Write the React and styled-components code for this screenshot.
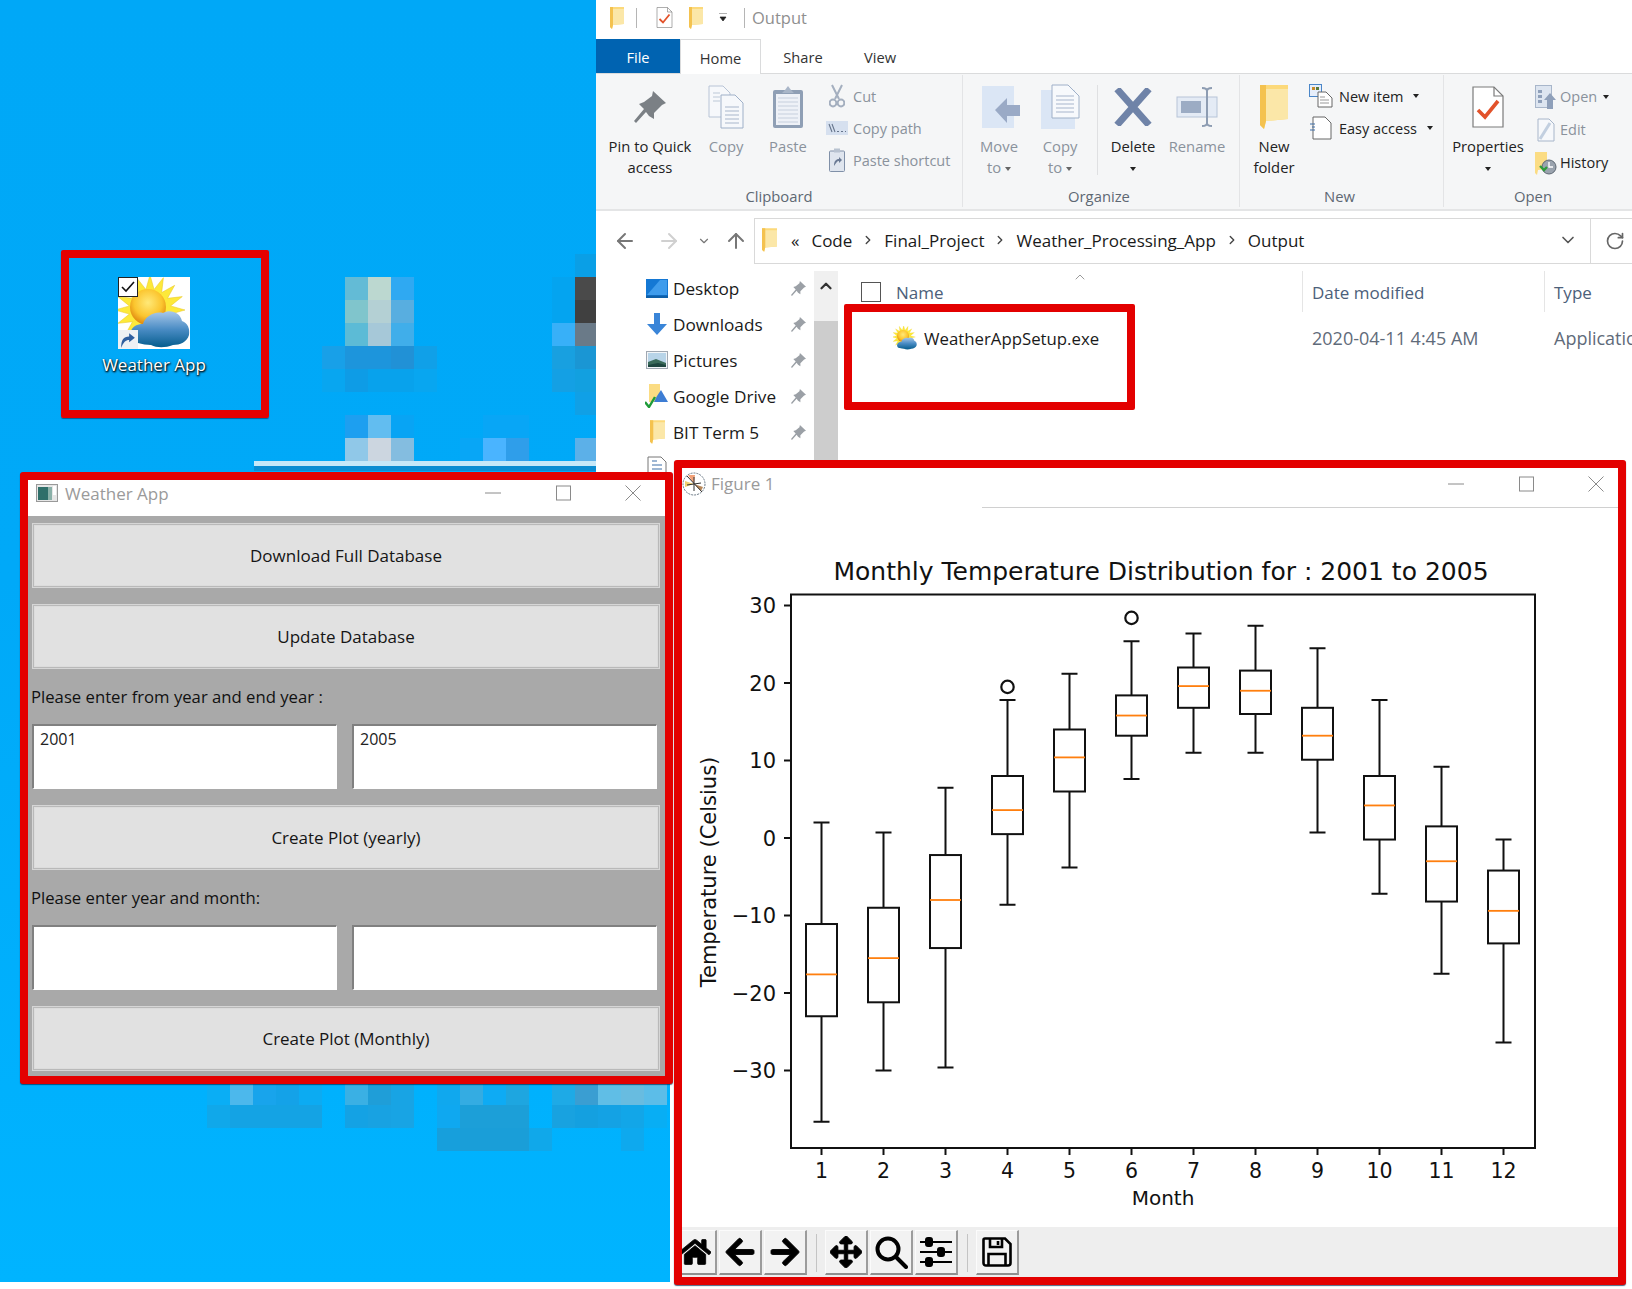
import React from "react";
import styled, { createGlobalStyle } from "styled-components";
import { ArrowLeft, ArrowRight, ArrowUp, ChevronDown, ChevronRight, ChevronUp, RotateCw } from "lucide-react";
import { FaHome, FaArrowLeft, FaArrowRight, FaArrowsAlt } from "react-icons/fa";

const UI_FONT = '"Open Sans", "Noto Sans", sans-serif';
const RED = "#e30000";

const GlobalStyle = createGlobalStyle`
  html, body { margin: 0; padding: 0; background: #fff; }
  body { font-family: ${UI_FONT}; }
`;

const Desktop = styled.div`
  position: relative;
  width: 1632px;
  height: 1289px;
  overflow: hidden;
  background: linear-gradient(180deg, #00a8f7 0, #00a9f8 580px, #00b4ff 1282px, #fff 1282px);
`;

/* ---------- pixelated desktop icons ---------- */
const Mosaic = styled.div`
  position: absolute;
  left: ${(p) => p.$x}px;
  top: ${(p) => p.$y}px;
  display: grid;
  grid-auto-columns: 23px;
  grid-auto-rows: 23px;
`;
const Cell = styled.span`
  grid-column: ${(p) => p.$c};
  grid-row: ${(p) => p.$r};
  background: ${(p) => p.$color};
`;
const upperCells = [
  [12, 1, "#0a9fe6"],
  [2, 2, "#63bbd6"], [3, 2, "#bcd8d0"], [4, 2, "#2fa9f2"], [11, 2, "#04a4f0"], [12, 2, "#4a4a4a"],
  [2, 3, "#80c5cc"], [3, 3, "#b4d0d4"], [4, 3, "#58aee0"], [11, 3, "#04a4f0"], [12, 3, "#404040"],
  [2, 4, "#5cbbd6"], [3, 4, "#a6c8d8"], [4, 4, "#40aeea"], [11, 4, "#38b0f8"], [12, 4, "#6a7a88"],
  [1, 5, "#18a0e8"], [2, 5, "#1d95dc"], [3, 5, "#1d95dc"], [4, 5, "#2191d6"], [5, 5, "#10a0e8"], [11, 5, "#18a0e0"], [12, 5, "#1a96d4"],
  [1, 6, "#08a6f0"], [2, 6, "#0e9ce6"], [3, 6, "#08a2ec"], [4, 6, "#08a2ec"], [5, 6, "#08a6f0"], [11, 6, "#14a0e4"], [12, 6, "#12a0e0"],
  [12, 7, "#10a0e6"],
  [2, 8, "#1d9ff0"], [3, 8, "#62bdf0"], [4, 8, "#08a4f4"], [8, 8, "#08a6f6"], [9, 8, "#08a6f6"],
  [2, 9, "#90c8e8"], [3, 9, "#ccd6e0"], [4, 9, "#84bde0"], [7, 9, "#08a6f6"], [8, 9, "#4ab4ff"], [9, 9, "#2f9eea"], [12, 9, "#5cb0e8"],
];
const lowerCells = [
  [1, 1, "#0aaef5"], [2, 1, "#4cb8ec"], [3, 1, "#18a4ec"], [4, 1, "#14a2e8"], [5, 1, "#0cabf2"],
  [7, 1, "#3ab0e4"], [8, 1, "#1f9ed8"], [9, 1, "#18a4e4"],
  [11, 1, "#10a8ee"], [12, 1, "#34ace2"], [13, 1, "#0eabf4"], [14, 1, "#1ea6e0"],
  [16, 1, "#1eaae6"], [17, 1, "#3a9ed2"], [18, 1, "#60bee6"], [19, 1, "#68bce0"], [20, 1, "#5cbde8"],
  [1, 2, "#10a8ea"], [2, 2, "#14a3e4"], [3, 2, "#14a3e4"], [4, 2, "#14a3e4"], [5, 2, "#14a3e4"],
  [7, 2, "#14a2e4"], [8, 2, "#18a2e2"], [9, 2, "#18a4e4"],
  [11, 2, "#0fa8f0"], [12, 2, "#1c9fd8"], [13, 2, "#1c9fd8"], [14, 2, "#1c9fd8"],
  [16, 2, "#18a2e0"], [17, 2, "#14a0e0"], [18, 2, "#14a2e4"], [19, 2, "#12a6e8"], [20, 2, "#08aef4"],
  [11, 3, "#179fdc"], [12, 3, "#1a9ed8"], [13, 3, "#1a9ed8"], [14, 3, "#1a9ed8"], [15, 3, "#10a8ea"], [19, 3, "#0ea9ee"],
];

const BackWindowEdge = styled.div`
  position: absolute;
  left: 254px;
  top: 461px;
  width: 342px;
  height: 10px;
  background: linear-gradient(180deg, #c6e8f8 0 5px, #0a8dd2 5px 100%);
`;
/* the explorer window carries on behind the figure */
const ExplorerBehind = styled.div`
  position: absolute;
  left: 670px;
  top: 472px;
  width: 962px;
  height: 810px;
  background: #fff;
`;

/* ---------- desktop shortcut ---------- */
const ShortcutCallout = styled.div`
  position: absolute;
  left: 61px;
  top: 250px;
  width: 208px;
  height: 168px;
  box-sizing: border-box;
  border: 8px solid ${RED};
  border-radius: 2px;
  padding: 19px 0 0 49px;
  box-shadow: 0 1px 1px rgba(0, 40, 80, 0.6);
`;
const ShortcutIcon = styled.div`
  position: relative;
  width: 72px;
  height: 72px;
  background: #fff;
`;
const ShortcutCheck = styled.div`
  position: absolute;
  left: 0;
  top: 0;
  width: 20px;
  height: 20px;
  box-sizing: border-box;
  border: 1px solid #222;
  background: #fff;
  display: flex;
  align-items: center;
  justify-content: center;
`;
const ShortcutArrow = styled.div`
  position: absolute;
  left: 0;
  bottom: 0;
  width: 20px;
  height: 19px;
  background: #eef1f4;
  display: flex;
  align-items: center;
  justify-content: center;
`;
const ShortcutLabel = styled.div`
  width: 132px;
  margin: 4px 0 0 -30px;
  text-align: center;
  font-size: 17px;
  line-height: 24px;
  color: #fff;
  text-shadow: 1px 1px 2px #000, 0 1px 2px rgba(0, 0, 0, 0.8);
  white-space: nowrap;
`;

const WeatherGlyph = ({ size = 72 }) => {
  const rays = [];
  for (let i = 0; i < 32; i++) {
    const r = i % 2 ? 21 : 35;
    const a = (i * Math.PI) / 16;
    rays.push(`${(32 + r * Math.sin(a)).toFixed(1)},${(33 - r * Math.cos(a)).toFixed(1)}`);
  }
  return (
    <svg width={size} height={size} viewBox="0 0 72 72">
      <defs>
        <radialGradient id="sunFill" cx="50%" cy="38%" r="60%">
          <stop offset="0%" stopColor="#ffe978" />
          <stop offset="65%" stopColor="#fbc52e" />
          <stop offset="100%" stopColor="#e08a10" />
        </radialGradient>
        <linearGradient id="cloudFill" x1="0" y1="0" x2="0" y2="1">
          <stop offset="0%" stopColor="#a9c8ea" />
          <stop offset="50%" stopColor="#4a8cc4" />
          <stop offset="100%" stopColor="#055d8e" />
        </linearGradient>
      </defs>
      <polygon points={rays.join(" ")} fill="#fde93a" stroke="#e6c520" strokeWidth="0.5" />
      <circle cx="30" cy="30" r="18" fill="url(#sunFill)" />
      <path
        d="M20 66C13 66 11 59 13 54C15 48 21 47 25 47C27 40 36 34 45 36C52 32 62 35 64 44C70 46 72 52 71 58C69 65 62 68 55 68C47 71 39 71 33 68C29 68 24 67 20 66Z"
        fill="url(#cloudFill)"
      />
    </svg>
  );
};

/* ---------- small ribbon / explorer drawings ---------- */
const Folder = ({ w = 14, h = 22 }) => (
  <svg width={w} height={h} viewBox="0 0 14 22">
    <path d="M0 0H14V17L3 18L2 22L0 20Z" fill="#fcd97a" />
    <path d="M3 2H14V17L3 18Z" fill="#fbe7a8" />
    <path d="M0 0H3V18L2 22L0 20Z" fill="#f4c24f" />
  </svg>
);
const Doc = ({ w = 32, h = 42, stroke = "#7b7b7b", children }) => (
  <svg width={w} height={h} viewBox="0 0 32 42">
    <path d="M1 1H22L31 10V41H1Z" fill="#fff" stroke={stroke} strokeWidth="1.2" />
    <path d="M22 1V10H31" fill="none" stroke={stroke} strokeWidth="1.2" />
    {children}
  </svg>
);
const Check = () => <path d="M6 24L13 31L26 15" fill="none" stroke="#e2522a" strokeWidth="3.6" />;
const PinGlyph = ({ size = 32, color = "#7b8085" }) => (
  <svg width={size} height={size} viewBox="0 0 32 32">
    <path d="M19 0L32 12L28 14L20 22L20 28L15 25L12 21L2 32L0 30L10 18L5 13L10 11L18 5Z" fill={color} />
  </svg>
);
const PageLines = ({ x, y, n, w, color = "#bcc7d8", gap = 4 }) => (
  <path d={Array.from({ length: n }, (_, i) => `M${x} ${y + i * gap}h${w}`).join("")} stroke={color} strokeWidth="1.2" />
);
const CopyGlyph = () => (
  <svg width="36" height="44" viewBox="0 0 36 44">
    <path d="M1 1H15L22 8V32H1Z" fill="#f6f8fb" stroke="#b8c4d6" />
    <path d="M13 10H27L35 18V43H13Z" fill="#f6f8fb" stroke="#9fb0c8" />
    <PageLines x={5} y={8} n={3} w={7} />
    <PageLines x={17} y={22} n={5} w={14} color="#a8b6cc" />
  </svg>
);
const PasteGlyph = () => (
  <svg width="32" height="44" viewBox="0 0 32 44">
    <rect x="1" y="5" width="30" height="38" rx="2" fill="#8f9fb5" />
    <rect x="4" y="9" width="24" height="31" fill="#eef1f7" />
    <path d="M10 8L13 5L16 1L19 5L22 8Z" fill="#a9b6c8" />
    <PageLines x={6} y={13} n={7} w={20} color="#c5cfde" />
  </svg>
);
const ScissorsGlyph = () => (
  <svg width="16" height="24" viewBox="0 0 16 24" fill="none" stroke="#a4afbf" strokeWidth="2">
    <path d="M3 1L10 15M13 1L6 15" />
    <circle cx="4" cy="19" r="3.4" />
    <circle cx="12" cy="19" r="3.4" />
  </svg>
);
const CopyPathGlyph = () => (
  <svg width="22" height="14" viewBox="0 0 22 14">
    <rect width="22" height="14" fill="#d6e0ef" />
    <path d="M3 3L6 11M6 3L9 11" stroke="#66758c" strokeWidth="1.1" />
    <path d="M11 10.5h2M15 10.5h2M19 10.5h1" stroke="#66758c" strokeWidth="1.2" />
  </svg>
);
const PasteShortcutGlyph = () => (
  <svg width="16" height="24" viewBox="0 0 16 24">
    <rect x="0.5" y="3" width="15" height="20.5" rx="1" fill="#dfe5ee" stroke="#8090a8" />
    <rect x="5" y="0.5" width="6" height="4" fill="#b8c2d0" />
    <path d="M5 18C5 13 7 11 10 11V9L13 12L10 15V13C8 13 7 15 5 18Z" fill="#6a7a94" />
  </svg>
);
const MoveGlyph = () => (
  <svg width="44" height="44" viewBox="0 0 44 44">
    <rect x="5" y="1" width="32" height="42" fill="#dbe6f5" />
    <path d="M18 25L30 13V20H43V31H30V38Z" fill="#9aaac6" />
  </svg>
);
const CopyToGlyph = () => (
  <svg width="40" height="46" viewBox="0 0 40 46">
    <rect x="1" y="6" width="34" height="39" fill="#dbe6f5" />
    <path d="M12 1H28L39 12V34H12Z" fill="#f7f9fc" stroke="#9fb0c8" />
    <PageLines x={16} y={12} n={5} w={18} color="#a8b6cc" />
  </svg>
);
const DeleteGlyph = () => (
  <svg width="38" height="38" viewBox="0 0 38 38">
    <path d="M3 1L35 37M35 1L3 37" stroke="#6f83a8" strokeWidth="7" />
  </svg>
);
const RenameGlyph = () => (
  <svg width="42" height="40" viewBox="0 0 42 40" fill="none">
    <rect x="1" y="10" width="40" height="20" fill="#e4ebf5" stroke="#b7c4d8" />
    <rect x="5" y="14" width="20" height="12" fill="#9cacc4" />
    <path d="M31 3V37M26 1C29 1 31 2 31 4C31 2 33 1 36 1M26 39C29 39 31 38 31 36C31 38 33 39 36 39" stroke="#8d9cb2" strokeWidth="2" />
  </svg>
);
const NewItemGlyph = () => (
  <svg width="24" height="24" viewBox="0 0 24 24">
    <rect x="0.5" y="0.5" width="12" height="12" fill="#e6eefb" stroke="#4a86c8" />
    <rect x="3" y="3" width="3" height="3" fill="#c88a2a" />
    <rect x="7" y="3" width="3" height="3" fill="#5a7a3a" />
    <path d="M9 8H17L23 14V23H9Z" fill="#fff" stroke="#666" />
    <path d="M11 13h5M11 16h9M11 19h9" stroke="#999" />
  </svg>
);
const EasyAccessGlyph = () => (
  <svg width="22" height="24" viewBox="0 0 22 24">
    <path d="M3 1H15L21 7V23H3Z" fill="#fff" stroke="#666" />
    <path d="M0 8h5M2 11h3M0 14h5" stroke="#3f6fa8" strokeWidth="1.2" />
  </svg>
);
const OpenGlyph = () => (
  <svg width="22" height="24" viewBox="0 0 22 24">
    <rect x="0.5" y="0.5" width="16" height="22" fill="#dde5f0" stroke="#a8b6ca" />
    <path d="M3 5h4v3H3zM3 10h4v3H3zM3 15h4v3H3z" fill="#8fa0ba" />
    <path d="M15 8L21 15H18V24H12V15H9Z" fill="#8fa0ba" />
  </svg>
);
const EditGlyph = () => (
  <svg width="18" height="24" viewBox="0 0 18 24">
    <path d="M1 1H12L17 6V23H1Z" fill="#f6f8fb" stroke="#a8b6ca" />
    <path d="M13 5L3 21" stroke="#c2cfe0" strokeWidth="3" />
  </svg>
);
const HistoryGlyph = () => (
  <svg width="22" height="24" viewBox="0 0 22 24">
    <path d="M0 1H12V18L3 19L2 24L0 22Z" fill="#fbdc83" />
    <circle cx="14" cy="16" r="7" fill="#9aa3ae" stroke="#5e6873" />
    <path d="M14 11V16H18" stroke="#fff" strokeWidth="1.4" fill="none" />
    <path d="M5 15L9 19L12 16" stroke="#2d9b3a" strokeWidth="2.4" fill="none" />
  </svg>
);
const DesktopGlyph = () => (
  <svg width="22" height="19" viewBox="0 0 22 19">
    <rect width="22" height="19" fill="#1478d4" />
    <path d="M1 16L14 1H21V16Z" fill="#3f9cec" />
    <rect y="16.5" width="22" height="2.5" fill="#0e5fa8" />
  </svg>
);
const DownloadGlyph = () => (
  <svg width="20" height="22" viewBox="0 0 20 22">
    <path d="M7 0H13V11H20L10 22L0 11H7Z" fill="#3a85d8" />
  </svg>
);
const PicturesGlyph = () => (
  <svg width="22" height="18" viewBox="0 0 22 18">
    <rect x="0.5" y="0.5" width="21" height="17" fill="#f2f5f8" stroke="#a0a8b2" />
    <rect x="2" y="2" width="18" height="14" fill="#b8d4e8" />
    <path d="M2 11L10 8L20 12V16H2Z" fill="#3a6a5a" />
    <path d="M2 14L12 12L20 14V16H2Z" fill="#1e4640" />
  </svg>
);
const DriveFolderGlyph = () => (
  <svg width="24" height="24" viewBox="0 0 24 24">
    <path d="M4 0H15V18H4Z" fill="#fbdc83" />
    <path d="M12 12L16 6L23 18H9Z" fill="#3d7dd4" />
    <path d="M0 18L4 23L10 13" stroke="#1f9b38" strokeWidth="2.4" fill="none" />
  </svg>
);
const SmallDocGlyph = () => (
  <svg width="20" height="24" viewBox="0 0 20 24">
    <path d="M1 1H14L19 6V23H1Z" fill="#fff" stroke="#777" />
    <path d="M5 5H10M5 9H15M5 13H15" stroke="#3d6ea8" strokeWidth="1.2" />
  </svg>
);
const TkGlyph = () => (
  <svg width="22" height="18" viewBox="0 0 22 18">
    <rect x="0.5" y="0.5" width="21" height="17" fill="#e6e6e6" stroke="#999" />
    <rect x="2" y="3" width="10" height="13" fill="#2f6f6a" />
    <rect x="12" y="3" width="4" height="13" fill="#8ab0a8" />
    <rect x="17" y="2" width="3" height="9" fill="#fff" />
  </svg>
);
const MplGlyph = () => (
  <svg width="24" height="24" viewBox="0 0 24 24">
    <circle cx="12" cy="12" r="11" fill="#fff" stroke="#456" strokeDasharray="2 1" strokeWidth="0.8" />
    <path d="M12 12L6 3L13 3Z" fill="#f2a27a" />
    <path d="M12 12L3 9L3 15Z" fill="#f0d070" />
    <path d="M12 12L19 19L21 15Z" fill="#b8885a" />
    <path d="M5 4L20 20M12 5L12 19M5 13L19 11" stroke="#333" strokeWidth="1" />
  </svg>
);

/* ---------- explorer ---------- */
const Explorer = styled.div`
  position: absolute;
  left: 596px;
  top: 0;
  width: 1036px;
  height: 472px;
  background: #fff;
  display: flex;
  flex-direction: column;
  overflow: hidden;
  font-family: ${UI_FONT};
  color: #1a1a1a;
`;
const QuickBar = styled.div`
  height: 39px;
  flex: none;
  box-sizing: border-box;
  display: flex;
  align-items: center;
  padding: 0 0 4px 14px;
  font-size: 16.5px;
  color: #8f8f8f;
`;
const QuickSlot = styled.span`
  display: flex;
  margin-left: ${(p) => p.$ml}px;
`;
const QuickDivider = styled.span`
  width: 1px;
  height: 20px;
  background: #b5b5b5;
  margin-left: ${(p) => p.$ml}px;
`;
const TabRow = styled.div`
  height: 35px;
  flex: none;
  display: flex;
  background: #fff;
  border-bottom: 1px solid #dadbdc;
  box-sizing: border-box;
`;
const Tab = styled.div`
  width: ${(p) => p.$w}px;
  height: ${(p) => (p.$active ? 35 : 34)}px;
  box-sizing: border-box;
  display: flex;
  align-items: center;
  justify-content: center;
  padding-top: 1px;
  font-size: 14.7px;
  background: ${(p) => (p.$file ? "#0063b1" : "#fff")};
  color: ${(p) => (p.$file ? "#fff" : "#333")};
  ${(p) => p.$active && "border: 1px solid #dadbdc; border-bottom: 0; z-index: 1;"}
`;
const Ribbon = styled.div`
  height: 137px;
  flex: none;
  display: flex;
  background: #f5f6f7;
  border-bottom: 2px solid #e4e5e6;
  box-sizing: border-box;
`;
const Group = styled.div`
  width: ${(p) => p.$w}px;
  flex: none;
  box-sizing: border-box;
  display: flex;
  flex-direction: column;
  border-right: ${(p) => (p.$last ? "0" : "1px solid #e3e4e6")};
  margin: 1px 0 2px;
`;
const GroupBody = styled.div`
  height: 110px;
  flex: none;
  display: flex;
  padding-left: ${(p) => p.$pad}px;
`;
const GroupLabel = styled.div`
  flex: 1;
  text-align: center;
  padding-right: ${(p) => p.$shift ?? 0}px;
  font-size: 14.8px;
  line-height: 23px;
  color: #5e6873;
`;
const LargeItem = styled.div`
  width: ${(p) => p.$w}px;
  flex: none;
  display: flex;
  flex-direction: column;
  align-items: center;
  padding-top: 3px;
  color: ${(p) => (p.$muted ? "#8a929c" : "#222")};
`;
const ItemText = styled.div`
  font-size: 14.8px;
  line-height: 21px;
  text-align: center;
  white-space: nowrap;
`;
const IconSlot = styled.div`
  height: 58px;
  display: flex;
  align-items: center;
  justify-content: center;
`;
const SmallColumn = styled.div`
  margin-left: ${(p) => p.$ml}px;
  padding-top: 5px;
  display: flex;
  flex-direction: column;
`;
const SmallItem = styled.div`
  height: ${(p) => p.$h ?? 32}px;
  display: flex;
  align-items: center;
  gap: ${(p) => p.$gap ?? 4}px;
  font-size: 14.5px;
  white-space: nowrap;
  color: ${(p) => (p.$muted ? "#8a929c" : "#222")};
`;
const SmallIcon = styled.span`
  width: 24px;
  display: flex;
  justify-content: center;
`;
const Caret = styled.span`
  display: inline-block;
  vertical-align: middle;
  margin-left: ${(p) => p.$ml ?? 4}px;
  border-left: 3.5px solid transparent;
  border-right: 3.5px solid transparent;
  border-top: 4px solid ${(p) => p.$color ?? "#222"};
`;
const RibbonDivider = styled.div`
  width: 1px;
  height: 90px;
  margin: 10px 0 0 7px;
  background: #dfe0e2;
`;
const AddressRow = styled.div`
  height: 60px;
  flex: none;
  display: flex;
  align-items: center;
`;
const NavButtons = styled.div`
  width: 158px;
  flex: none;
  display: grid;
  grid-template-columns: 57px 32px 38px 26px;
  justify-items: center;
  align-items: center;
`;
const AddressBar = styled.div`
  width: 836px;
  height: 46px;
  flex: none;
  box-sizing: border-box;
  border: 1px solid #d9d9d9;
  border-right: 0;
  display: flex;
  align-items: center;
  padding: 0 0 2px 7px;
  font-size: 17px;
  color: #1a1a1a;
`;
const Crumb = styled.span`
  margin-left: ${(p) => p.$ml ?? 0}px;
  white-space: nowrap;
`;
const CrumbArrow = styled(ChevronRight)`
  margin: 0 9px;
  color: #444;
  flex: none;
  stroke-width: 2.4;
`;
const AddressEnd = styled.div`
  margin-left: auto;
  margin-right: 12px;
  display: flex;
  color: #555;
`;
const RefreshBox = styled.div`
  flex: 1;
  height: 46px;
  box-sizing: border-box;
  border: 1px solid #d9d9d9;
  border-right: 0;
  display: flex;
  align-items: center;
  padding-left: 14px;
  color: #666;
`;
const Content = styled.div`
  flex: 1;
  display: flex;
  min-height: 0;
`;
const NavPane = styled.div`
  width: 218px;
  flex: none;
  margin-top: -1px;
`;
const NavRow = styled.div`
  height: 36px;
  display: flex;
  align-items: center;
  padding: 0 8px 0 49px;
  font-size: 17.2px;
`;
const NavIcon = styled.span`
  width: 24px;
  margin-right: 4px;
  display: flex;
  justify-content: center;
`;
const NavPin = styled.span`
  margin-left: auto;
  display: flex;
`;
const ScrollTrack = styled.div`
  width: 24px;
  flex: none;
  background: #f0f0f0;
  display: flex;
  flex-direction: column;
`;
const ScrollUp = styled.div`
  height: 30px;
  flex: none;
  display: flex;
  align-items: center;
  justify-content: center;
  color: #333;
`;
const ScrollThumb = styled.div`
  flex: 1;
  margin-top: 20px;
  background: #cdcdcd;
`;
const FileList = styled.div`
  flex: 1;
  position: relative;
  display: flex;
  flex-direction: column;
`;
const FileHeader = styled.div`
  height: 41px;
  flex: none;
  display: grid;
  grid-template-columns: 465px 242px 1fr;
  font-size: 17px;
  color: #4c607a;
`;
const HeaderCell = styled.div`
  display: flex;
  align-items: center;
  padding: 2px 0 0 ${(p) => p.$pad}px;
  border-right: ${(p) => (p.$line ? "1px solid #e5e5e5" : "0")};
`;
const HeaderCheck = styled.span`
  width: 18px;
  height: 18px;
  border: 1px solid #555;
  margin-right: 15px;
  margin-top: -2px;
`;
const SortCaret = styled(ChevronUp)`
  position: absolute;
  left: 234px;
  top: -2px;
  color: #666;
`;
const FileRow = styled.div`
  height: 52px;
  flex: none;
  display: grid;
  grid-template-columns: 465px 242px 1fr;
  align-items: center;
  font-size: 16.8px;
`;
const FileName = styled.div`
  display: flex;
  align-items: center;
  gap: 7px;
  padding-left: 55px;
`;
const FileMeta = styled.div`
  color: #5f6b7a;
  font-size: 18px;
  padding-left: ${(p) => p.$pad}px;
  white-space: nowrap;
`;
const FileCallout = styled.div`
  position: absolute;
  left: 844px;
  top: 304px;
  width: 291px;
  height: 106px;
  box-sizing: border-box;
  border: 8px solid ${RED};
  border-radius: 2px;
`;

/* ---------- window chrome shared by both apps ---------- */
const AppWindow = styled.div`
  position: absolute;
  left: ${(p) => p.$x}px;
  top: ${(p) => p.$y}px;
  width: ${(p) => p.$w}px;
  height: ${(p) => p.$h}px;
  box-sizing: border-box;
  border: 8px solid ${RED};
  border-radius: 3px;
  background: #fff;
  display: flex;
  flex-direction: column;
  overflow: hidden;
  font-family: ${UI_FONT};
  box-shadow: 0 1px 1px rgba(0, 40, 80, 0.7);
`;
const WindowTitle = styled.div`
  height: ${(p) => p.$h}px;
  flex: none;
  box-sizing: border-box;
  display: flex;
  align-items: center;
  padding: 0 ${(p) => p.$right}px ${(p) => p.$lift}px ${(p) => p.$left}px;
  font-size: 17px;
  color: #9a9a9a;
  background: #fff;
  gap: ${(p) => p.$gap}px;
`;
const WindowControls = styled.div`
  margin-left: auto;
  display: flex;
  gap: 40px;
  color: #8a8a8a;
`;
const Control = styled.svg`
  width: 30px;
  height: 18px;
  display: block;
`;
const Controls = () => (
  <WindowControls>
    <Control viewBox="0 0 30 18"><path d="M7 9H23" stroke="currentColor" strokeWidth="1" /></Control>
    <Control viewBox="0 0 30 18"><rect x="8.5" y="2" width="14" height="14" fill="none" stroke="currentColor" /></Control>
    <Control viewBox="0 0 30 18"><path d="M7.5 1.5L22.5 16.5M22.5 1.5L7.5 16.5" stroke="currentColor" strokeWidth="1" /></Control>
  </WindowControls>
);

/* ---------- weather app ---------- */
const Form = styled.div`
  flex: 1;
  background: #a9a9a9;
  padding: 7px 5px 0 4px;
  display: flex;
  flex-direction: column;
  gap: 16px;
`;
const ActionButton = styled.button`
  height: 65px;
  flex: none;
  box-sizing: border-box;
  border: 1px solid #d6d6d6;
  background: #e1e1e1;
  box-shadow: inset 0 0 0 1px #b9b9b9, inset 0 0 0 2px #dcdcdc;
  font-family: ${UI_FONT};
  font-size: 17px;
  color: #151515;
  padding: 0;
`;
const FieldLabel = styled.div`
  height: 23px;
  flex: none;
  line-height: 23px;
  font-size: 16.7px;
  color: #111;
  margin-left: -1px;
`;
const FieldRow = styled.div`
  display: grid;
  grid-template-columns: 305px 305px;
  gap: 15px;
  height: 65px;
  flex: none;
`;
const Field = styled.textarea`
  box-sizing: border-box;
  border: 1px solid #fff;
  border-top: 2px solid #808080;
  border-left: 2px solid #808080;
  resize: none;
  outline: 0;
  padding: 2px 6px;
  overflow: hidden;
  font-family: ${UI_FONT};
  font-size: 16px;
  line-height: 22px;
  color: #222;
  background: #fff;
`;

/* ---------- matplotlib figure ---------- */
const PlotSvg = styled.svg`
  display: block;
  flex: none;
  background: #fff;
`;
const PlotText = styled.text`
  font-family: "DejaVu Sans", sans-serif;
  font-size: ${(p) => p.$size}px;
  fill: #111;
`;
const TitleRule = styled.div`
  position: absolute;
  left: 300px;
  right: 0;
  top: 39px;
  height: 1px;
  background: #d0d0d0;
`;
const Toolbar = styled.div`
  height: 50px;
  flex: none;
  background: #eeeeee;
  display: flex;
  align-items: center;
  padding-top: 1px;
  box-sizing: border-box;
`;
const ToolButton = styled.div`
  width: 43px;
  height: 45px;
  flex: none;
  box-sizing: border-box;
  margin-left: ${(p) => p.$ml ?? 2}px;
  background: #f2f2f2;
  border: 1px solid #fbfbfb;
  border-right: 2px solid #9c9c9c;
  border-bottom: 2px solid #8f8f8f;
  display: flex;
  align-items: center;
  justify-content: center;
  color: #000;
  font-size: 32px;
  svg { stroke: #000; stroke-width: 14; }
`;
const ToolDivider = styled.div`
  width: 1px;
  height: 38px;
  flex: none;
  margin-left: 9px;
  background: #c4c4c4;
`;

const boxes = [
  { top: 2, q3: -11.1, med: -17.6, q1: -23, low: -36.6 },
  { top: 0.7, q3: -9, med: -15.5, q1: -21.2, low: -30 },
  { top: 6.5, q3: -2.2, med: -8, q1: -14.2, low: -29.6 },
  { top: 17.8, q3: 8, med: 3.6, q1: 0.5, low: -8.6, flier: 19.5 },
  { top: 21.2, q3: 14, med: 10.4, q1: 6, low: -3.8 },
  { top: 25.4, q3: 18.4, med: 15.8, q1: 13.2, low: 7.6, flier: 28.4 },
  { top: 26.4, q3: 22, med: 19.6, q1: 16.8, low: 11 },
  { top: 27.4, q3: 21.6, med: 19, q1: 16, low: 11 },
  { top: 24.5, q3: 16.8, med: 13.2, q1: 10.1, low: 0.7 },
  { top: 17.8, q3: 8, med: 4.2, q1: -0.2, low: -7.2 },
  { top: 9.2, q3: 1.5, med: -3, q1: -8.2, low: -17.5 },
  { top: -0.2, q3: -4.2, med: -9.4, q1: -13.6, low: -26.4 },
];
const yOf = (v) => 838 - v * 7.75;
const xOf = (i) => 821.5 + i * 62;

const BoxPlot = () => (
  <PlotSvg width="936" height="720" viewBox="682 507 936 720">
    <PlotText $size={25} x="1161" y="580" textAnchor="middle">
      Monthly Temperature Distribution for : 2001 to 2005
    </PlotText>
    <rect x="791" y="594.5" width="744" height="553.5" fill="none" stroke="#111" strokeWidth="2" />
    {[30, 20, 10, 0, -10, -20, -30].map((v) => (
      <g key={v}>
        <path d={`M784 ${yOf(v)}H791`} stroke="#111" strokeWidth="2" />
        <PlotText $size={21} x="776" y={yOf(v) + 7.5} textAnchor="end">
          {v < 0 ? `\u2212${-v}` : v}
        </PlotText>
      </g>
    ))}
    {boxes.map((b, i) => {
      const x = xOf(i);
      return (
        <g key={i} fill="none" stroke="#111" strokeWidth="2">
          <path d={`M${x} ${yOf(b.top)}V${yOf(b.q3)}M${x} ${yOf(b.q1)}V${yOf(b.low)}`} />
          <path d={`M${x - 8} ${yOf(b.top)}h16M${x - 8} ${yOf(b.low)}h16`} />
          <rect x={x - 15.5} y={yOf(b.q3)} width="31" height={yOf(b.q1) - yOf(b.q3)} />
          <path d={`M${x - 15.5} ${yOf(b.med)}h31`} stroke="#ff7f0e" strokeWidth="1.8" />
          {b.flier !== undefined && <circle cx={x} cy={yOf(b.flier)} r="6.2" strokeWidth="2.2" />}
          <path d={`M${x} 1148v7`} />
          <PlotText $size={20.5} x={x} y="1178" textAnchor="middle" stroke="none">
            {i + 1}
          </PlotText>
        </g>
      );
    })}
    <PlotText $size={20} x="1163" y="1205" textAnchor="middle">Month</PlotText>
    <PlotText $size={21} x="716" y="872" textAnchor="middle" transform="rotate(-90 716 872)">
      Temperature (Celsius)
    </PlotText>
  </PlotSvg>
);

const SearchTool = () => (
  <svg width="34" height="34" viewBox="0 0 34 34" fill="none" style={{ strokeWidth: 4 }}>
    <circle cx="14" cy="14" r="10.5" />
    <path d="M22 22L32 32" strokeLinecap="round" />
  </svg>
);
const SlidersTool = () => (
  <svg width="32" height="30" viewBox="0 0 32 30" style={{ strokeWidth: 2 }}>
    <path d="M0 5H32M0 15H32M0 25H32" />
    <rect x="6" y="1" width="6" height="8" rx="2" fill="#000" />
    <rect x="18" y="11" width="6" height="8" rx="2" fill="#000" />
    <rect x="6" y="21" width="6" height="8" rx="2" fill="#000" />
  </svg>
);
const SaveTool = () => (
  <svg width="30" height="30" viewBox="0 0 30 30" fill="none" style={{ strokeWidth: 2.6 }}>
    <path d="M3 1.5H23L28.5 7V26C28.5 27.5 27.5 28.5 26 28.5H4C2.5 28.5 1.5 27.5 1.5 26V3C1.5 2 2 1.5 3 1.5Z" />
    <path d="M8 2V10H20V2M16 4V8" />
    <path d="M6.5 28V17H23.5V28" />
  </svg>
);

const navItems = [
  { icon: <DesktopGlyph />, label: "Desktop" },
  { icon: <DownloadGlyph />, label: "Downloads" },
  { icon: <PicturesGlyph />, label: "Pictures" },
  { icon: <DriveFolderGlyph />, label: "Google Drive" },
  { icon: <Folder w={15} h={24} />, label: "BIT Term 5" },
];

const ExplorerWindow = () => (
  <Explorer>
    <QuickBar>
      <QuickSlot $ml={0}><Folder /></QuickSlot>
      <QuickDivider $ml={12} />
      <QuickSlot $ml={19}><Doc w={17} h={21} stroke="#777"><Check /></Doc></QuickSlot>
      <QuickSlot $ml={16}><Folder /></QuickSlot>
      <QuickSlot $ml={16}><svg width="8" height="9" viewBox="0 0 8 9"><path d="M0 0H8M1 4H7L4 8Z" fill="#222" stroke="#222" strokeWidth="0.7" /></svg></QuickSlot>
      <QuickDivider $ml={17} />
      <QuickSlot $ml={7}>Output</QuickSlot>
    </QuickBar>
    <TabRow>
      <Tab $w={84} $file>File</Tab>
      <Tab $w={81} $active>Home</Tab>
      <Tab $w={84}>Share</Tab>
      <Tab $w={70}>View</Tab>
    </TabRow>
    <Ribbon>
      <Group $w={367}>
        <GroupBody $pad={9}>
          <LargeItem $w={90}><IconSlot><PinGlyph /></IconSlot><ItemText>Pin to Quick<br />access</ItemText></LargeItem>
          <LargeItem $w={62} $muted><IconSlot><CopyGlyph /></IconSlot><ItemText>Copy</ItemText></LargeItem>
          <LargeItem $w={62} $muted><IconSlot><PasteGlyph /></IconSlot><ItemText>Paste</ItemText></LargeItem>
          <SmallColumn $ml={6}>
            <SmallItem $muted><SmallIcon><ScissorsGlyph /></SmallIcon>Cut</SmallItem>
            <SmallItem $muted><SmallIcon><CopyPathGlyph /></SmallIcon>Copy path</SmallItem>
            <SmallItem $muted><SmallIcon><PasteShortcutGlyph /></SmallIcon>Paste shortcut</SmallItem>
          </SmallColumn>
        </GroupBody>
        <GroupLabel>Clipboard</GroupLabel>
      </Group>
      <Group $w={277}>
        <GroupBody $pad={5}>
          <LargeItem $w={62} $muted><IconSlot><MoveGlyph /></IconSlot><ItemText>Move<br />to<Caret $color="#666" /></ItemText></LargeItem>
          <LargeItem $w={60} $muted><IconSlot><CopyToGlyph /></IconSlot><ItemText>Copy<br />to<Caret $color="#666" /></ItemText></LargeItem>
          <RibbonDivider />
          <LargeItem $w={70}><IconSlot><DeleteGlyph /></IconSlot><ItemText>Delete<br /><Caret $ml={0} /></ItemText></LargeItem>
          <LargeItem $w={58} $muted><IconSlot><RenameGlyph /></IconSlot><ItemText>Rename</ItemText></LargeItem>
        </GroupBody>
        <GroupLabel $shift={4}>Organize</GroupLabel>
      </Group>
      <Group $w={204}>
        <GroupBody $pad={5}>
          <LargeItem $w={58}><IconSlot><Folder w={28} h={44} /></IconSlot><ItemText>New<br />folder</ItemText></LargeItem>
          <SmallColumn $ml={6}>
            <SmallItem $gap={6}><SmallIcon><NewItemGlyph /></SmallIcon>New item<Caret /></SmallItem>
            <SmallItem $gap={6}><SmallIcon><EasyAccessGlyph /></SmallIcon>Easy access<Caret /></SmallItem>
          </SmallColumn>
        </GroupBody>
        <GroupLabel $shift={4}>New</GroupLabel>
      </Group>
      <Group $w={188} $last>
        <GroupBody $pad={4}>
          <LargeItem $w={80}><IconSlot><Doc><Check /></Doc></IconSlot><ItemText>Properties<br /><Caret $ml={0} /></ItemText></LargeItem>
          <SmallColumn $ml={6}>
            <SmallItem $h={33} $gap={2} $muted><SmallIcon><OpenGlyph /></SmallIcon>Open<Caret /></SmallItem>
            <SmallItem $h={33} $gap={2} $muted><SmallIcon><EditGlyph /></SmallIcon>Edit</SmallItem>
            <SmallItem $h={33} $gap={2}><SmallIcon><HistoryGlyph /></SmallIcon>History</SmallItem>
          </SmallColumn>
        </GroupBody>
        <GroupLabel $shift={10}>Open</GroupLabel>
      </Group>
    </Ribbon>
    <AddressRow>
      <NavButtons>
        <ArrowLeft size={24} color="#777" />
        <ArrowRight size={24} color="#d0d0d0" />
        <ChevronDown size={14} color="#777" />
        <ArrowUp size={24} color="#777" />
      </NavButtons>
      <AddressBar>
        <Folder w={15} h={24} />
        <Crumb $ml={14}>«</Crumb>
        <Crumb $ml={12}>Code</Crumb>
        <CrumbArrow size={14} />
        <Crumb>Final_Project</Crumb>
        <CrumbArrow size={14} />
        <Crumb>Weather_Processing_App</Crumb>
        <CrumbArrow size={14} />
        <Crumb>Output</Crumb>
        <AddressEnd><ChevronDown size={20} /></AddressEnd>
      </AddressBar>
      <RefreshBox><RotateCw size={20} /></RefreshBox>
    </AddressRow>
    <Content>
      <NavPane>
        {navItems.map((item) => (
          <NavRow key={item.label}>
            <NavIcon>{item.icon}</NavIcon>
            {item.label}
            <NavPin><PinGlyph size={15} color="#9ba0a6" /></NavPin>
          </NavRow>
        ))}
        <NavRow><NavIcon><SmallDocGlyph /></NavIcon></NavRow>
      </NavPane>
      <ScrollTrack>
        <ScrollUp><ChevronUp size={18} strokeWidth={3} /></ScrollUp>
        <ScrollThumb />
      </ScrollTrack>
      <FileList>
        <SortCaret size={16} strokeWidth={1} />
        <FileHeader>
          <HeaderCell $pad={23} $line><HeaderCheck />Name</HeaderCell>
          <HeaderCell $pad={9} $line>Date modified</HeaderCell>
          <HeaderCell $pad={9}>Type</HeaderCell>
        </FileHeader>
        <FileRow>
          <FileName><WeatherGlyph size={24} />WeatherAppSetup.exe</FileName>
          <FileMeta $pad={9}>2020-04-11 4:45 AM</FileMeta>
          <FileMeta $pad={9}>Application</FileMeta>
        </FileRow>
      </FileList>
    </Content>
  </Explorer>
);

export default function App() {
  return (
    <>
      <GlobalStyle />
      <Desktop>
        <Mosaic $x={322} $y={254}>
          {upperCells.map(([c, r, color]) => <Cell key={`${c}-${r}`} $c={c} $r={r} $color={color} />)}
        </Mosaic>
        <Mosaic $x={207} $y={1082}>
          {lowerCells.map(([c, r, color]) => <Cell key={`${c}-${r}`} $c={c} $r={r} $color={color} />)}
        </Mosaic>
        <BackWindowEdge />
        <ExplorerWindow />
        <ExplorerBehind />
        <FileCallout />
        <ShortcutCallout>
          <ShortcutIcon>
            <WeatherGlyph />
            <ShortcutCheck>
              <svg width="14" height="12" viewBox="0 0 14 12"><path d="M1 6L5 10L13 1" fill="none" stroke="#111" strokeWidth="1.6" /></svg>
            </ShortcutCheck>
            <ShortcutArrow>
              <svg width="16" height="16" viewBox="0 0 14 14"><path d="M1 14C1 7 3 4 8 4V1L13 5L8 9V7C5 7 3 9 1 14Z" fill="#2f5f9f" /></svg>
            </ShortcutArrow>
          </ShortcutIcon>
          <ShortcutLabel>Weather App</ShortcutLabel>
        </ShortcutCallout>

        <AppWindow $x={20} $y={472} $w={653} $h={612}>
          <WindowTitle $h={36} $left={8} $right={17} $lift={10} $gap={7}>
            <TkGlyph />
            Weather App
            <Controls />
          </WindowTitle>
          <Form>
            <ActionButton>Download Full Database</ActionButton>
            <ActionButton>Update Database</ActionButton>
            <FieldLabel>Please enter from year and end year :</FieldLabel>
            <FieldRow>
              <Field readOnly defaultValue="2001" />
              <Field readOnly defaultValue="2005" />
            </FieldRow>
            <ActionButton>Create Plot (yearly)</ActionButton>
            <FieldLabel>Please enter year and month:</FieldLabel>
            <FieldRow>
              <Field readOnly defaultValue="" />
              <Field readOnly defaultValue="" />
            </FieldRow>
            <ActionButton>Create Plot (Monthly)</ActionButton>
          </Form>
        </AppWindow>

        <AppWindow $x={674} $y={460} $w={952} $h={825}>
          <WindowTitle $h={39} $left={0} $right={7} $lift={8} $gap={5}>
            <MplGlyph />
            Figure 1
            <Controls />
          </WindowTitle>
          <TitleRule />
          <BoxPlot />
          <Toolbar>
            <ToolButton $ml={-8}><FaHome /></ToolButton>
            <ToolButton><FaArrowLeft /></ToolButton>
            <ToolButton><FaArrowRight /></ToolButton>
            <ToolDivider />
            <ToolButton $ml={8}><FaArrowsAlt /></ToolButton>
            <ToolButton><SearchTool /></ToolButton>
            <ToolButton><SlidersTool /></ToolButton>
            <ToolDivider />
            <ToolButton $ml={8}><SaveTool /></ToolButton>
          </Toolbar>
        </AppWindow>
      </Desktop>
    </>
  );
}
